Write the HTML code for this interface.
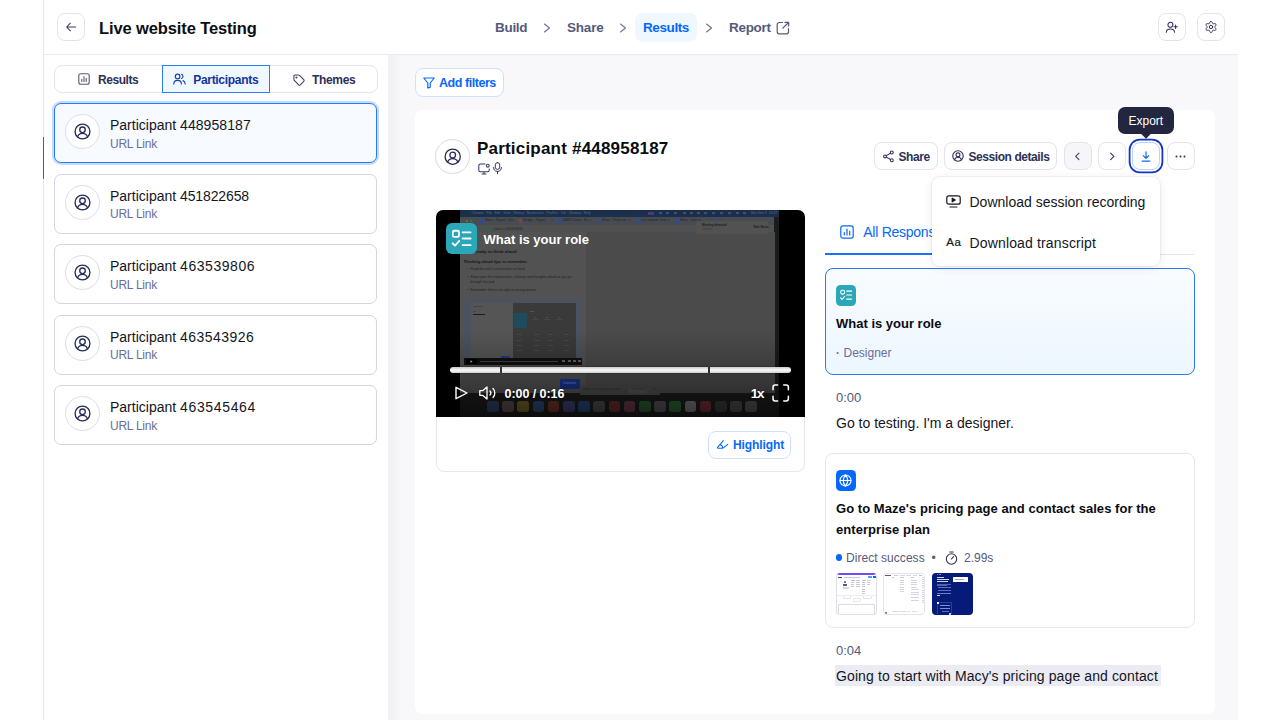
<!DOCTYPE html>
<html lang="en">
<head>
<meta charset="utf-8">
<title>Live website Testing</title>
<style>
*{box-sizing:border-box;margin:0;padding:0}
html,body{width:1280px;height:720px;overflow:hidden;background:#fff}
body{font-family:"Liberation Sans",sans-serif;color:#0d0e14;position:relative;-webkit-font-smoothing:antialiased}
.abs,.abs>*{position:absolute}
.t{position:absolute;white-space:nowrap;line-height:1}
.b{font-weight:700}
.btn{position:absolute;background:#fff;border:1px solid #e2e3ee;border-radius:8px}
svg{position:absolute;overflow:visible}
.navy{color:#2c3157}
.slate{color:#545a7c}
.muted{color:#686e9a}
.blue{color:#0568fd}
</style>
</head>
<body>
<!-- frame -->
<div class="abs" style="left:43px;top:0;width:1px;height:720px;background:#e6e7f0"></div>
<div class="abs" style="left:44px;top:55px;width:1194px;height:665px;background:#f8f8fb"></div>
<div class="abs" style="left:44px;top:54px;width:1194px;height:1px;background:#e9eaf2"></div>
<div class="abs" style="left:44px;top:55px;width:344px;height:665px;background:#fff"></div>
<div class="abs" style="left:388px;top:55px;width:14px;height:665px;background:linear-gradient(90deg,rgba(40,45,89,.045),rgba(40,45,89,0))"></div>
<div class="abs" style="left:43px;top:136.700px;width:1.200px;height:42px;background:#0568fd"></div>

<!-- HEADER -->
<div id="header">
  <div class="btn" style="left:57px;top:13.200px;width:28px;height:28.200px"></div>
  <svg style="left:65.300px;top:21.400px" width="12" height="12" viewBox="0 0 12 12" fill="none" stroke="#353b63" stroke-width="1.050" stroke-linecap="round" stroke-linejoin="round"><path d="M10.5 6H1.8M5.4 2.2 1.6 6l3.8 3.8"/></svg>
  <div class="t b" style="left:99px;top:20.200px;font-size:16.5px;letter-spacing:-0.12px">Live website Testing</div>

  <div class="t b slate" style="left:495px;top:21px;font-size:13.5px;letter-spacing:-0.3px">Build</div>
  <div class="t b slate" style="left:567px;top:21px;font-size:13.5px;letter-spacing:-0.2px">Share</div>
  <div class="abs" style="left:635px;top:13px;width:62px;height:29px;background:#eff7ff;border-radius:8px"></div>
  <div class="t b blue" style="left:643px;top:21px;font-size:13.5px;letter-spacing:-0.4px">Results</div>
  <div class="t b slate" style="left:729px;top:21px;font-size:13.5px;letter-spacing:-0.3px">Report</div>
  <svg style="left:543px;top:23px" width="8" height="10" viewBox="0 0 8 10" fill="none" stroke="#6c7195" stroke-width="1.1" stroke-linecap="round" stroke-linejoin="round"><path d="M1.5 1 6.5 5l-5 4"/></svg>
  <svg style="left:619px;top:23px" width="8" height="10" viewBox="0 0 8 10" fill="none" stroke="#6c7195" stroke-width="1.1" stroke-linecap="round" stroke-linejoin="round"><path d="M1.5 1 6.5 5l-5 4"/></svg>
  <svg style="left:705px;top:23px" width="8" height="10" viewBox="0 0 8 10" fill="none" stroke="#6c7195" stroke-width="1.1" stroke-linecap="round" stroke-linejoin="round"><path d="M1.5 1 6.5 5l-5 4"/></svg>
  <svg style="left:776px;top:21px" width="14" height="14" viewBox="0 0 14 14" fill="none" stroke="#545a7c" stroke-width="1.2" stroke-linecap="round" stroke-linejoin="round"><path d="M6.5 1.5H3.2a2 2 0 0 0-2 2v7.3a2 2 0 0 0 2 2h7.3a2 2 0 0 0 2-2V7.6M9 1.3h3.7V5M12.5 1.5 6.8 7.2"/></svg>

  <div class="btn" style="left:1158px;top:13.200px;width:28px;height:28.200px"></div>
  <div class="btn" style="left:1197px;top:13.200px;width:28px;height:28.200px"></div>
  <svg style="left:1165px;top:21px" width="14" height="13" viewBox="0 0 14 13" fill="none" stroke="#2c3157" stroke-width="1.050" stroke-linecap="round" stroke-linejoin="round"><circle cx="5.400" cy="3.800" r="2.500"/><path d="M1.300 11.200c0-2.200 1.700-3.200 4.100-3.200s4.100 1 4.100 3.200M10.600 4.100v3.400M8.900 5.800h3.400"/></svg>
  <svg style="left:1204.200px;top:20.400px" width="14" height="14" viewBox="-7 -7 14 14" fill="none" stroke="#2c3157" stroke-width="1" stroke-linecap="round" stroke-linejoin="round"><path d="M0.00 -5.65L0.48 -5.50L0.90 -5.10L1.22 -4.54L1.45 -3.97L1.64 -3.51L1.87 -3.25L2.22 -3.18L2.72 -3.24L3.32 -3.32L3.96 -3.33L4.52 -3.17L4.89 -2.83L5.01 -2.33L4.86 -1.77L4.54 -1.22L4.16 -0.73L3.86 -0.34L3.75 -0.00L3.86 0.34L4.16 0.73L4.54 1.22L4.86 1.77L5.01 2.33L4.89 2.82L4.52 3.17L3.96 3.33L3.32 3.32L2.72 3.24L2.22 3.18L1.88 3.25L1.64 3.51L1.45 3.97L1.22 4.54L0.90 5.10L0.48 5.50L0.00 5.65L-0.48 5.50L-0.90 5.10L-1.22 4.54L-1.45 3.97L-1.64 3.51L-1.88 3.25L-2.22 3.18L-2.72 3.24L-3.32 3.32L-3.96 3.33L-4.52 3.17L-4.89 2.83L-5.01 2.33L-4.86 1.77L-4.54 1.22L-4.16 0.73L-3.86 0.34L-3.75 0.00L-3.86 -0.34L-4.16 -0.73L-4.54 -1.22L-4.86 -1.77L-5.01 -2.33L-4.89 -2.82L-4.52 -3.17L-3.96 -3.33L-3.32 -3.32L-2.72 -3.24L-2.22 -3.18L-1.87 -3.25L-1.64 -3.51L-1.45 -3.97L-1.22 -4.54L-0.90 -5.10L-0.48 -5.50Z"/><circle cx="0" cy="0" r="1.700"/></svg>
</div>

<!-- SIDEBAR -->

<div id="sidebar">
  <!-- tabs -->
  <div class="abs" style="left:54px;top:65px;width:323.600px;height:28px;border:1px solid #e4e5ef;border-radius:8px;background:#fff"></div>
  <div class="abs" style="left:161.800px;top:65px;width:108px;height:28px;border:1.300px solid #2f7bf6;background:#f0f8ff"></div>
  <svg style="left:78.200px;top:73px" width="12" height="12" viewBox="0 0 12 12" fill="none" stroke="#545a7c" stroke-width="1.1" stroke-linecap="round" stroke-linejoin="round"><rect x=".8" y=".8" width="10.4" height="10.4" rx="2"/><path d="M3.8 8.6V6.4M6 8.6V3.6M8.2 8.6V5.4"/></svg>
  <div class="t b navy" style="left:98px;top:74.200px;font-size:12px;letter-spacing:-0.46px">Results</div>
  <svg style="left:173px;top:73px" width="13" height="12" viewBox="0 0 13 12" fill="none" stroke="#1d3fb3" stroke-width="1.15" stroke-linecap="round" stroke-linejoin="round"><circle cx="4.6" cy="3.4" r="2.3"/><path d="M.8 11c0-2.3 1.6-3.7 3.8-3.700s3.800 1.400 3.800 3.700M8.600 1.300a2.300 2.300 0 0 1 0 4.200M10 7.600c1.400.500 2.200 1.700 2.200 3.400"/></svg>
  <div class="t b" style="left:193.200px;top:74.200px;font-size:12px;letter-spacing:-0.30px;color:#12339f">Participants</div>
  <svg style="left:292.600px;top:73.500px" width="12" height="12" viewBox="0 0 13 13" fill="none" stroke="#3a3f63" stroke-width="1.1" stroke-linecap="round" stroke-linejoin="round"><path d="M1 2.300V6c0 .400.150.700.400 1l4.700 4.700a1.300 1.300 0 0 0 1.850 0l3.700-3.700a1.300 1.300 0 0 0 0-1.850L7 1.400C6.700 1.150 6.400 1 6 1H2.300A1.300 1.300 0 0 0 1 2.300Z"/><circle cx="3.700" cy="3.700" r=".5" fill="#3a3f63"/></svg>
  <div class="t b navy" style="left:312px;top:74.200px;font-size:12px;letter-spacing:-0.32px">Themes</div>
  <div class="abs" style="left:54px;top:103px;width:323px;height:60px;border:1px solid #2b78f5;border-radius:7px;background:#f7fbff;box-shadow:0 0 0 2px #c6dcff"></div>
  <div class="abs" style="left:65px;top:114px;width:35px;height:35px;border:1px solid #dcdde9;border-radius:50%;background:#fff"></div>
  <svg style="left:74px;top:123px" width="17" height="17" viewBox="0 0 16 16" fill="none" stroke="#272c55" stroke-width="1.25" stroke-linecap="round" stroke-linejoin="round"><circle cx="8" cy="8" r="7"/><circle cx="8" cy="6.400" r="2.600"/><path d="M3.300 13.100c.700-2.200 2.400-3.400 4.700-3.400s4 1.200 4.700 3.400"/></svg>
  <div class="t" style="left:110px;top:118px;font-size:14px;color:#14151d">Participant <span style="letter-spacing:0.07px">448958187</span></div>
  <div class="t muted" style="left:110px;top:137.5px;font-size:12px;letter-spacing:-0.25px">URL Link</div>
  <div class="abs" style="left:54px;top:173.5px;width:323px;height:60px;border:1px solid #d3d4e6;border-radius:7px;background:#fff"></div>
  <div class="abs" style="left:65px;top:184.5px;width:35px;height:35px;border:1px solid #dcdde9;border-radius:50%;background:#fff"></div>
  <svg style="left:74px;top:193.5px" width="17" height="17" viewBox="0 0 16 16" fill="none" stroke="#272c55" stroke-width="1.25" stroke-linecap="round" stroke-linejoin="round"><circle cx="8" cy="8" r="7"/><circle cx="8" cy="6.400" r="2.600"/><path d="M3.300 13.100c.700-2.200 2.400-3.400 4.700-3.400s4 1.200 4.700 3.400"/></svg>
  <div class="t" style="left:110px;top:188.5px;font-size:14px;color:#14151d">Participant <span style="letter-spacing:-0.13px">451822658</span></div>
  <div class="t muted" style="left:110px;top:208.0px;font-size:12px;letter-spacing:-0.25px">URL Link</div>
  <div class="abs" style="left:54px;top:244px;width:323px;height:60px;border:1px solid #d3d4e6;border-radius:7px;background:#fff"></div>
  <div class="abs" style="left:65px;top:255px;width:35px;height:35px;border:1px solid #dcdde9;border-radius:50%;background:#fff"></div>
  <svg style="left:74px;top:264px" width="17" height="17" viewBox="0 0 16 16" fill="none" stroke="#272c55" stroke-width="1.25" stroke-linecap="round" stroke-linejoin="round"><circle cx="8" cy="8" r="7"/><circle cx="8" cy="6.400" r="2.600"/><path d="M3.300 13.100c.700-2.200 2.400-3.400 4.700-3.400s4 1.200 4.700 3.400"/></svg>
  <div class="t" style="left:110px;top:259px;font-size:14px;color:#14151d">Participant <span style="letter-spacing:0.55px">463539806</span></div>
  <div class="t muted" style="left:110px;top:278.5px;font-size:12px;letter-spacing:-0.25px">URL Link</div>
  <div class="abs" style="left:54px;top:314.5px;width:323px;height:60px;border:1px solid #d3d4e6;border-radius:7px;background:#fff"></div>
  <div class="abs" style="left:65px;top:325.5px;width:35px;height:35px;border:1px solid #dcdde9;border-radius:50%;background:#fff"></div>
  <svg style="left:74px;top:334.5px" width="17" height="17" viewBox="0 0 16 16" fill="none" stroke="#272c55" stroke-width="1.25" stroke-linecap="round" stroke-linejoin="round"><circle cx="8" cy="8" r="7"/><circle cx="8" cy="6.400" r="2.600"/><path d="M3.300 13.100c.700-2.200 2.400-3.400 4.700-3.400s4 1.200 4.700 3.400"/></svg>
  <div class="t" style="left:110px;top:329.5px;font-size:14px;color:#14151d">Participant <span style="letter-spacing:0.45px">463543926</span></div>
  <div class="t muted" style="left:110px;top:349.0px;font-size:12px;letter-spacing:-0.25px">URL Link</div>
  <div class="abs" style="left:54px;top:385px;width:323px;height:60px;border:1px solid #d3d4e6;border-radius:7px;background:#fff"></div>
  <div class="abs" style="left:65px;top:396px;width:35px;height:35px;border:1px solid #dcdde9;border-radius:50%;background:#fff"></div>
  <svg style="left:74px;top:405px" width="17" height="17" viewBox="0 0 16 16" fill="none" stroke="#272c55" stroke-width="1.25" stroke-linecap="round" stroke-linejoin="round"><circle cx="8" cy="8" r="7"/><circle cx="8" cy="6.400" r="2.600"/><path d="M3.300 13.100c.700-2.200 2.400-3.400 4.700-3.400s4 1.200 4.700 3.400"/></svg>
  <div class="t" style="left:110px;top:400px;font-size:14px;color:#14151d">Participant <span style="letter-spacing:0.65px">463545464</span></div>
  <div class="t muted" style="left:110px;top:419.5px;font-size:12px;letter-spacing:-0.25px">URL Link</div>
</div>

<!-- MAIN -->

<div id="main">
  <!-- add filters -->
  <div class="btn" style="left:415px;top:68px;width:89px;height:29px;border-color:#cfe1ff"></div>
  <svg style="left:423px;top:77px" width="12" height="12" viewBox="0 0 12 12" fill="none" stroke="#0568fd" stroke-width="1.2" stroke-linecap="round" stroke-linejoin="round"><path d="M.8 1h10.400L7.200 6v4.300L4.800 11V6Z"/></svg>
  <div class="t b blue" style="left:439px;top:77px;font-size:12.5px;letter-spacing:-0.45px">Add filters</div>

  <!-- main card -->
  <div class="abs" style="left:415px;top:110px;width:800px;height:604px;background:#fff;border-radius:8px"></div>

  <!-- participant header -->
  <div class="abs" style="left:435px;top:139px;width:35px;height:35px;border:1px solid #d9dae7;border-radius:50%;background:#fff"></div>
  <svg style="left:444px;top:147.600px" width="17.400" height="17.400" viewBox="0 0 16 16" fill="none" stroke="#272c55" stroke-width="1.2" stroke-linecap="round" stroke-linejoin="round"><circle cx="8" cy="8" r="7"/><circle cx="8" cy="6.400" r="2.600"/><path d="M3.300 13.100c.700-2.200 2.400-3.400 4.700-3.400s4 1.200 4.700 3.400"/></svg>
  <div class="t b" style="left:477px;top:140px;font-size:17px;letter-spacing:0.2px;color:#0b0c10">Participant #448958187</div>
  <svg style="left:477.500px;top:162.500px" width="13" height="12" viewBox="0 0 13 12" fill="none" stroke="#333860" stroke-width="1.050" stroke-linecap="round" stroke-linejoin="round"><path d="M7 .9H2.300a1.500 1.500 0 0 0-1.500 1.500v4.900a1.500 1.500 0 0 0 1.500 1.500h7.400a1.500 1.500 0 0 0 1.500-1.500V6M6 8.800v2M4 10.900h4"/><circle cx="9.800" cy="2.700" r="1.400"/></svg>
  <svg style="left:493px;top:162.200px" width="9" height="12" viewBox="0 0 9 12" fill="none" stroke="#333860" stroke-width="1" stroke-linecap="round" stroke-linejoin="round"><rect x="2.300" y=".6" width="4.400" height="6.800" rx="2.200"/><path d="M.6 5.500a3.900 3.900 0 0 0 7.800 0M4.500 9.500v2.200"/></svg>

  <!-- toolbar -->
  <div class="btn" style="left:874.4px;top:142.200px;width:63.3px;height:28.100px"></div>
  <svg style="left:882.500px;top:150px" width="12" height="13" viewBox="0 0 12 13" fill="none" stroke="#2c3157" stroke-width="1.050" stroke-linecap="round" stroke-linejoin="round"><circle cx="2" cy="6.400" r="1.450"/><circle cx="8.800" cy="2.500" r="1.450"/><circle cx="8.800" cy="10.200" r="1.450"/><path d="M3.300 5.650 7.500 3.250M3.300 7.150 7.500 9.450"/></svg>
  <div class="t b navy" style="left:898.500px;top:150.500px;font-size:12px;letter-spacing:-0.45px">Share</div>

  <div class="btn" style="left:944px;top:142.200px;width:113px;height:28.100px"></div>
  <svg style="left:952px;top:150px" width="12" height="12" viewBox="0 0 16 16" fill="none" stroke="#2c3157" stroke-width="1.500" stroke-linecap="round" stroke-linejoin="round"><circle cx="8" cy="8" r="7"/><circle cx="8" cy="6.400" r="2.600"/><path d="M3.300 13.100c.700-2.200 2.400-3.400 4.700-3.400s4 1.200 4.700 3.400"/></svg>
  <div class="t b navy" style="left:968.500px;top:150.500px;font-size:12px;letter-spacing:-0.43px">Session details</div>

  <div class="btn" style="left:1063.5px;top:142.200px;width:28px;height:28.100px;background:#f6f6fa"></div>
  <svg style="left:1073.800px;top:152px" width="6.600" height="8.800" viewBox="0 0 6 8" fill="none" stroke="#3a3f63" stroke-width=".95" stroke-linecap="round" stroke-linejoin="round"><path d="M4.500 1 1.500 4l3 3"/></svg>
  <div class="btn" style="left:1098px;top:142.200px;width:28px;height:28.100px"></div>
  <svg style="left:1108.800px;top:152px" width="6.600" height="8.800" viewBox="0 0 6 8" fill="none" stroke="#2c3157" stroke-width=".95" stroke-linecap="round" stroke-linejoin="round"><path d="M1.500 1 4.500 4l-3 3"/></svg>
  <div class="btn" style="left:1132px;top:142.200px;width:28px;height:28.100px;border-color:#bcd4fb;box-shadow:0 0 0 1.500px #fff,0 0 0 3.300px #1337c4"></div>
  <svg style="left:1141px;top:151px" width="10" height="11" viewBox="0 0 10 11" fill="none" stroke="#0568fd" stroke-width="1.200" stroke-linecap="round" stroke-linejoin="round"><path d="M5 .8v6.400M2.300 4.700 5 7.400l2.700-2.700M1.200 10.200h7.600"/></svg>
  <div class="btn" style="left:1167px;top:142.200px;width:28px;height:28.100px"></div>
  <svg style="left:1174.700px;top:155.300px" width="11" height="3" viewBox="0 0 11 3" fill="#2c3157"><circle cx="1.500" cy="1.500" r="1"/><circle cx="5.500" cy="1.500" r="1"/><circle cx="9.500" cy="1.500" r="1"/></svg>

  <!-- tooltip -->
  <div class="abs" style="left:1118px;top:106.500px;width:56.200px;height:27.500px;background:#22263f;border-radius:7px"></div>
  <div class="abs" style="left:1142px;top:129px;width:8px;height:8px;background:#22263f;transform:rotate(45deg)"></div>
  <div class="t" style="left:1128.500px;top:114.500px;font-size:12px;color:#fff">Export</div>

  <!-- video card -->
  <div class="abs" style="left:435.500px;top:209.500px;width:369.500px;height:262px;border:1px solid #e6e7f0;border-radius:8px;background:#fff"></div>
  <div id="video" class="abs" style="left:436px;top:210px;width:369px;height:207px;background:#000;border-radius:7px 7px 0 0;overflow:hidden">
    <div style="left:24px;top:0px;width:319px;height:207px;background:#1c1c1e;"></div>
    <div style="left:24px;top:0px;width:319px;height:6.5px;background:#1b2f4c;"></div>
    <div style="left:24px;top:6.5px;width:314.5px;height:8.5px;background:#474b52;"></div>
    <div style="left:24px;top:15px;width:314.5px;height:7px;background:#4f5051;"></div>
    <div style="left:338.3px;top:6.5px;width:4.7px;height:200.5px;background:#1c1c1e;"></div>
    <div style="left:24px;top:22px;width:126px;height:161px;background:#525252;"></div>
    <div style="left:150px;top:22px;width:188.5px;height:161px;background:#4b4b4b;"></div>
    <div style="left:260px;top:11px;width:72px;height:13px;background:#525252;border-radius:2px"></div>
    <div style="left:279.5px;top:7.5px;width:3px;height:1.2px;background:#2a4ab0;"></div>
    <div style="left:26.5px;top:9.9px;width:2.2px;height:2.2px;background:#8a3a34;border-radius:50%"></div>
    <div style="left:30px;top:9.9px;width:2.2px;height:2.2px;background:#8a742f;border-radius:50%"></div>
    <div style="left:33.5px;top:9.9px;width:2.2px;height:2.2px;background:#3c7a3a;border-radius:50%"></div>
    <div style="left:44.2px;top:9.3px;width:3px;height:3.5px;background:#2a4a9a;border-radius:.6px"></div>
    <div style="left:83.3px;top:9.3px;width:3px;height:3.5px;background:#9a3a30;border-radius:.6px"></div>
    <div style="left:121.7px;top:9.3px;width:3px;height:3.5px;background:#2a4a9a;border-radius:.6px"></div>
    <div style="left:160.8px;top:9.3px;width:3px;height:3.5px;background:#2a4a9a;border-radius:.6px"></div>
    <div style="left:201.5px;top:9.3px;width:3px;height:3.5px;background:#2a4a9a;border-radius:.6px"></div>
    <div style="left:240.3px;top:9.3px;width:3px;height:3.5px;background:#2a4a9a;border-radius:.6px"></div>
    <div style="left:212px;top:1.8px;width:6px;height:3px;background:#4a3a7a;"></div>
    <div style="left:223px;top:2.3px;width:3px;height:2px;background:#3f5272;border-radius:.5px"></div>
    <div style="left:230px;top:2.3px;width:3px;height:2px;background:#3f5272;border-radius:.5px"></div>
    <div style="left:238px;top:2.3px;width:3px;height:2px;background:#3f5272;border-radius:.5px"></div>
    <div style="left:247px;top:2.3px;width:3px;height:2px;background:#3f5272;border-radius:.5px"></div>
    <div style="left:254px;top:2.3px;width:3px;height:2px;background:#3f5272;border-radius:.5px"></div>
    <div style="left:261px;top:2.3px;width:3px;height:2px;background:#3f5272;border-radius:.5px"></div>
    <div style="left:268px;top:2.3px;width:3px;height:2px;background:#3f5272;border-radius:.5px"></div>
    <div style="left:276px;top:2.3px;width:3px;height:2px;background:#3f5272;border-radius:.5px"></div>
    <div style="left:284px;top:2.3px;width:3px;height:2px;background:#3f5272;border-radius:.5px"></div>
    <div style="left:292px;top:2.3px;width:3px;height:2px;background:#3f5272;border-radius:.5px"></div>
    <div style="left:300px;top:2.3px;width:3px;height:2px;background:#3f5272;border-radius:.5px"></div>
    <div style="left:307px;top:2.3px;width:3px;height:2px;background:#3f5272;border-radius:.5px"></div>
    <div style="left:51.4px;top:18.1px;width:3.2px;height:3.2px;background:#1f6b3a;border-radius:50%"></div>
    <div style="left:313.5px;top:16px;width:2px;height:3px;background:#2f6a3a;border-radius:.5px"></div>
    <div style="left:28px;top:88px;width:118px;height:66.5px;background:#4a535e;"></div>
    <div style="left:34.5px;top:92.5px;width:42px;height:55.5px;background:#555555;"></div>
    <div style="left:76.5px;top:92.5px;width:63.5px;height:55.5px;background:#3a3a3a;"></div>
    <div style="left:77.5px;top:103px;width:13px;height:15px;background:#1f4c5c;"></div>
    <div style="left:37px;top:95.5px;width:10px;height:0.7px;background:#444;"></div>
    <div style="left:37px;top:101px;width:3px;height:0.6px;background:#444;"></div>
    <div style="left:37px;top:104.3px;width:12px;height:0.9px;background:#1c1c1c;"></div>
    <div style="left:94px;top:101px;width:4px;height:0.8px;background:#555;"></div>
    <div style="left:98px;top:107px;width:2px;height:1px;background:#505050;"></div>
    <div style="left:96px;top:109.3px;width:6px;height:0.7px;background:#474747;"></div>
    <div style="left:110px;top:107px;width:2px;height:1px;background:#505050;"></div>
    <div style="left:108px;top:109.3px;width:6px;height:0.7px;background:#474747;"></div>
    <div style="left:122px;top:107px;width:2px;height:1px;background:#505050;"></div>
    <div style="left:120px;top:109.3px;width:6px;height:0.7px;background:#474747;"></div>
    <div style="left:81px;top:124px;width:5px;height:0.7px;background:#484848;"></div>
    <div style="left:98px;top:124px;width:5px;height:0.7px;background:#484848;"></div>
    <div style="left:112px;top:124px;width:5px;height:0.7px;background:#484848;"></div>
    <div style="left:128px;top:124px;width:5px;height:0.7px;background:#484848;"></div>
    <div style="left:81px;top:130px;width:5px;height:0.7px;background:#484848;"></div>
    <div style="left:98px;top:130px;width:5px;height:0.7px;background:#484848;"></div>
    <div style="left:112px;top:130px;width:5px;height:0.7px;background:#484848;"></div>
    <div style="left:128px;top:130px;width:5px;height:0.7px;background:#484848;"></div>
    <div style="left:81px;top:135px;width:5px;height:0.7px;background:#484848;"></div>
    <div style="left:98px;top:135px;width:5px;height:0.7px;background:#484848;"></div>
    <div style="left:112px;top:135px;width:5px;height:0.7px;background:#484848;"></div>
    <div style="left:128px;top:135px;width:5px;height:0.7px;background:#484848;"></div>
    <div style="left:81px;top:140px;width:5px;height:0.7px;background:#484848;"></div>
    <div style="left:98px;top:140px;width:5px;height:0.7px;background:#484848;"></div>
    <div style="left:112px;top:140px;width:5px;height:0.7px;background:#484848;"></div>
    <div style="left:128px;top:140px;width:5px;height:0.7px;background:#484848;"></div>
    <div style="left:28px;top:147.5px;width:118px;height:7px;background:#101010;"></div>
    <div style="left:30px;top:148.5px;width:11px;height:5px;background:#000;"></div>
    <svg style="left:34px;top:149.600px" width="3" height="3" viewBox="0 0 3 3"><path d="M.5 .3v2.400L2.600 1.500Z" fill="#c8c8c8"/></svg>
    <div style="left:44px;top:150.6px;width:78px;height:1px;background:#454545;"></div>
    <div style="left:126px;top:149.6px;width:3px;height:2.8px;background:#6a6a6a;border-radius:.6px"></div>
    <div style="left:131.5px;top:149.6px;width:3px;height:2.8px;background:#6a6a6a;border-radius:.6px"></div>
    <div style="left:136.5px;top:149.6px;width:3px;height:2.8px;background:#6a6a6a;border-radius:.6px"></div>
    <div style="left:141.5px;top:149.6px;width:3px;height:2.8px;background:#6a6a6a;border-radius:.6px"></div>
    <div style="left:65px;top:145.5px;width:8.5px;height:2.2px;background:#1d3a90;"></div>
    <div style="left:123.5px;top:168.5px;width:20.5px;height:10px;background:#18348c;border-radius:1.5px"></div>
    <div style="left:144px;top:176px;width:80px;height:9px;background:#4c4c4c;border-radius:1px"></div>
    <div style="left:193px;top:177.5px;width:18px;height:6px;background:#565656;border-radius:1px"></div>
    <div style="left:51px;top:190.500px;width:11.500px;height:11.500px;background:#3a66b0;border-radius:2.700px;opacity:.5"></div>
    <div style="left:66.2px;top:190.500px;width:11.500px;height:11.500px;background:#9a7a7a;border-radius:2.700px;opacity:.5"></div>
    <div style="left:81.4px;top:190.500px;width:11.500px;height:11.500px;background:#c8a830;border-radius:2.700px;opacity:.5"></div>
    <div style="left:96.6px;top:190.500px;width:11.500px;height:11.500px;background:#3a78c8;border-radius:2.700px;opacity:.5"></div>
    <div style="left:111.8px;top:190.500px;width:11.500px;height:11.500px;background:#c8482e;border-radius:2.700px;opacity:.5"></div>
    <div style="left:127px;top:190.500px;width:11.500px;height:11.500px;background:#5a5fc8;border-radius:2.700px;opacity:.5"></div>
    <div style="left:142.2px;top:190.500px;width:11.500px;height:11.500px;background:#2f6fd0;border-radius:2.700px;opacity:.5"></div>
    <div style="left:157.4px;top:190.500px;width:11.500px;height:11.500px;background:#7a7a7a;border-radius:2.700px;opacity:.5"></div>
    <div style="left:172.6px;top:190.500px;width:11.500px;height:11.500px;background:#b83a3a;border-radius:2.700px;opacity:.5"></div>
    <div style="left:187.8px;top:190.500px;width:11.500px;height:11.500px;background:#b05a6a;border-radius:2.700px;opacity:.5"></div>
    <div style="left:203px;top:190.500px;width:11.500px;height:11.500px;background:#3a9a3a;border-radius:2.700px;opacity:.5"></div>
    <div style="left:218.2px;top:190.500px;width:11.500px;height:11.500px;background:#8a8a8a;border-radius:2.700px;opacity:.5"></div>
    <div style="left:233.4px;top:190.500px;width:11.500px;height:11.500px;background:#3aaa4a;border-radius:2.700px;opacity:.5"></div>
    <div style="left:248.6px;top:190.500px;width:11.500px;height:11.500px;background:#d0d0d0;border-radius:2.700px;opacity:.5"></div>
    <div style="left:263.8px;top:190.500px;width:11.500px;height:11.500px;background:#c83a4a;border-radius:2.700px;opacity:.5"></div>
    <div style="left:279px;top:190.500px;width:11.500px;height:11.500px;background:#555;border-radius:2.700px;opacity:.5"></div>
    <div style="left:294.2px;top:190.500px;width:11.500px;height:11.500px;background:#777;border-radius:2.700px;opacity:.5"></div>
    <div style="left:309.4px;top:190.500px;width:11.500px;height:11.500px;background:#888;border-radius:2.700px;opacity:.5"></div>
    <div class="t" style="left:49px;top:9.3px;font-size:3.2px;font-weight:400;color:#262626;">Maze - Report - Un&#8230;</div>
    <div class="t" style="left:87.5px;top:9.3px;font-size:3.2px;font-weight:400;color:#262626;">Bridge &#8211; Figma</div>
    <div class="t" style="left:127px;top:9.3px;font-size:3.2px;font-weight:400;color:#262626;">MAZE Demo - Bu&#8230;</div>
    <div class="t" style="left:166px;top:9.3px;font-size:3.2px;font-weight:400;color:#262626;">Maze - Think use&#8230;</div>
    <div class="t" style="left:205px;top:9.3px;font-size:3.2px;font-weight:400;color:#262626;">Live website Testi&#8230;</div>
    <div class="t" style="left:244px;top:9.3px;font-size:3.2px;font-weight:400;color:#262626;">Maze - User st&#8230;</div>
    <div class="t" style="left:76px;top:9.3px;font-size:3.2px;font-weight:400;color:#262626;">&#215;</div>
    <div class="t" style="left:115px;top:9.3px;font-size:3.2px;font-weight:400;color:#262626;">&#215;</div>
    <div class="t" style="left:154px;top:9.3px;font-size:3.2px;font-weight:400;color:#262626;">&#215;</div>
    <div class="t" style="left:193px;top:9.3px;font-size:3.2px;font-weight:400;color:#262626;">&#215;</div>
    <div class="t" style="left:232px;top:9.3px;font-size:3.2px;font-weight:400;color:#262626;">&#215;</div>
    <div class="t" style="left:35.5px;top:1.7px;font-size:3.4px;font-weight:400;color:#566c8c;">Chrome&nbsp;&nbsp; File&nbsp;&nbsp; Edit&nbsp;&nbsp; View&nbsp;&nbsp; History&nbsp;&nbsp; Bookmarks&nbsp;&nbsp; Profiles&nbsp;&nbsp; Tab&nbsp;&nbsp; Window&nbsp;&nbsp; Help</div>
    <div class="t" style="left:315px;top:1.7px;font-size:3.3px;font-weight:400;color:#566c8c;">Mon Nov 3&nbsp; 13:47</div>
    <div class="t" style="left:57.5px;top:18.2px;font-size:3px;font-weight:400;color:#262626;">t.maze.co/463539806</div>
    <div class="t" style="left:266px;top:13.5px;font-size:3px;font-weight:700;color:#1c1c1c;">Meeting detected</div>
    <div class="t" style="left:266px;top:17.5px;font-size:2.8px;font-weight:400;color:#3a3a3a;">Chrome</div>
    <div class="t" style="left:317px;top:15.5px;font-size:3px;font-weight:700;color:#1c1c1c;">Take Notes</div>
    <div class="t" style="left:37.3px;top:39.6px;font-size:4.4px;font-weight:700;color:#161616;">Ready to think aloud</div>
    <div class="t" style="left:27.5px;top:50.4px;font-size:4.1px;font-weight:700;color:#161616;">Thinking aloud tips to remember</div>
    <div class="t" style="left:31.3px;top:58.3px;font-size:3.4px;font-weight:400;color:#222;">&#8226;&nbsp; Read the task&#39;s instructions out loud</div>
    <div class="t" style="left:31.3px;top:66px;font-size:3.4px;font-weight:400;color:#222;">&#8226;&nbsp; Share your first impressions, feelings and thoughts aloud as you go</div>
    <div class="t" style="left:34.4px;top:71px;font-size:3.4px;font-weight:400;color:#222;">through the task</div>
    <div class="t" style="left:31.3px;top:78.5px;font-size:3.4px;font-weight:400;color:#222;">&#8226;&nbsp; Remember there&#39;s no right or wrong answer</div>
    <div class="t" style="left:127px;top:171.8px;font-size:3.2px;font-weight:400;color:#7f97e0;">Continue</div>
    <div class="t" style="left:147px;top:178.7px;font-size:2.6px;font-weight:400;color:#2e2e2e;">t.maze.co is sharing your screen.</div>
    <div class="t" style="left:195px;top:178.7px;font-size:2.6px;font-weight:400;color:#2e2e2e;">Stop sharing</div>
    <div class="t" style="left:215px;top:178.7px;font-size:2.6px;font-weight:400;color:#1d3c9a;">Hide</div>
    <div style="left:0;top:120px;width:369px;height:87px;background:linear-gradient(180deg,rgba(0,0,0,0) 0%,rgba(0,0,0,.28) 60%,rgba(0,0,0,.55) 100%)"></div>
    <div style="left:10px;top:13.300px;width:31px;height:31px;border-radius:6px;background:#2aa7b8"></div>
    <svg style="left:10px;top:13.300px" width="31" height="31" viewBox="0 0 20 20" fill="none" stroke="#fff" stroke-width="1.150" stroke-linecap="round" stroke-linejoin="round"><rect x="4.400" y="5" width="4" height="4" rx=".9"/><path d="M10.700 6h5.200M10.700 10h5.200M10.700 14.300h5.200M4.300 13.100l1.500 1.500 2.800-3"/></svg>
    <div class="t b" style="left:47.500px;top:22.500px;font-size:13px;color:#fff">What is your role</div>
    <div style="left:13.500px;top:157px;width:50.500px;height:5.500px;background:linear-gradient(180deg,#c9c9c9 0%,#f4f4f4 45%,#f4f4f4 60%,#cfcfcf 100%);box-shadow:0 0 2px rgba(0,0,0,.55);border-radius:3px 0 0 3px"></div>
    <div style="left:66px;top:157px;width:206px;height:5.500px;background:linear-gradient(180deg,#c9c9c9 0%,#f4f4f4 45%,#f4f4f4 60%,#cfcfcf 100%);box-shadow:0 0 2px rgba(0,0,0,.55)"></div>
    <div style="left:274px;top:157px;width:81px;height:5.500px;background:linear-gradient(180deg,#c9c9c9 0%,#f4f4f4 45%,#f4f4f4 60%,#cfcfcf 100%);box-shadow:0 0 2px rgba(0,0,0,.55);border-radius:0 3px 3px 0"></div>
    <svg style="left:18.500px;top:176px" width="13" height="14" viewBox="0 0 13 14" fill="none" stroke="#fff" stroke-width="1.400" stroke-linejoin="round"><path d="M1 1.300v11.400L12 7Z"/></svg>
    <svg style="left:42.500px;top:176px" width="18" height="14" viewBox="0 0 18 14" fill="none" stroke="#fff" stroke-width="1.300" stroke-linecap="round" stroke-linejoin="round"><path d="M.8 4.700h2.800L8 1v12L3.600 9.300H.8Z"/><path d="M11 5a3 3 0 0 1 0 4M14 2.500a6.500 6.500 0 0 1 0 9"/></svg>
    <div class="t b" style="left:68.500px;top:177.800px;font-size:12.500px;color:#fff;letter-spacing:-0.05px;text-shadow:0 0 2px rgba(0,0,0,.6)">0:00 / 0:16</div>
    <div class="t b" style="left:314.700px;top:177px;font-size:13.500px;color:#fff;letter-spacing:-1.300px;text-shadow:0 0 2px rgba(0,0,0,.6)">1x</div>
    <svg style="left:335.800px;top:173.900px" width="17.400" height="18" viewBox="0 0 17 17" preserveAspectRatio="none" fill="none" stroke="#fff" stroke-width="1.500" stroke-linecap="round" stroke-linejoin="round"><path d="M1 5.500V3a2 2 0 0 1 2-2h2.500M11.500 1H14a2 2 0 0 1 2 2v2.500M16 11.500V14a2 2 0 0 1-2 2h-2.500M5.500 16H3a2 2 0 0 1-2-2v-2.500"/></svg>
  </div>
  <div class="btn" style="left:708px;top:430.700px;width:83px;height:28px;border-color:#cfe1ff"></div>
  <svg style="left:717px;top:440px" width="12" height="10" viewBox="0 0 12 10" fill="none" stroke="#0568fd" stroke-width="1.050" stroke-linecap="round" stroke-linejoin="round"><path d="M6.300 .6.600 7.400C.2 8 .5 8.300 1.100 8.300H5.600L10.700 4.300M2.700 4.700C4.400 4.500 5.700 6.300 5.600 8.300"/></svg>
  <div class="t b blue" style="left:733px;top:439px;font-size:12px;letter-spacing:-0.1px">Highlight</div>

  <!-- responses tab -->
  <div class="abs" style="left:825px;top:254px;width:369px;height:1px;background:#e4e5ef"></div>
  <div class="abs" style="left:825px;top:252.700px;width:130px;height:2px;background:#1a72fc"></div>
  <svg style="left:839.900px;top:224.700px" width="14" height="14" viewBox="0 0 14 14" fill="none" stroke="#0568fd" stroke-width="1.200" stroke-linecap="round" stroke-linejoin="round"><rect x=".8" y=".8" width="12.400" height="12.400" rx="2.200"/><path d="M4.300 10V7.600M7 10V4M9.700 10V6.200"/></svg>
  <div class="t blue" style="left:863.300px;top:224.800px;font-size:14px;letter-spacing:-0.26px">All Responses</div>

  <!-- question card 1 -->
  <div class="abs" style="left:825px;top:268px;width:369.500px;height:106.500px;border:1px solid #2b78f5;border-radius:8px;background:linear-gradient(180deg,#f8fcff 0%,#edf7ff 100%)"></div>
  <div class="abs" style="left:835.600px;top:285px;width:20.500px;height:20.800px;border-radius:4.500px;background:#2aa7b8;box-shadow:0 0 0 1.200px #fff"></div>
  <svg style="left:835.600px;top:285.400px" width="20.500" height="20" viewBox="0 0 20 20" fill="none" stroke="#fff" stroke-width="1.100" stroke-linecap="round" stroke-linejoin="round"><rect x="4.500" y="5.300" width="3.800" height="3.800" rx="1.500"/><path d="M10.400 6.100h5M10.400 10h5M10.400 14.100h5M4.400 12.900l1.400 1.400 2.600-2.800"/></svg>
  <div class="t b" style="left:836px;top:317px;font-size:13px;color:#0b0c10">What is your role</div>
  <div class="t muted" style="left:836.300px;top:348.800px;font-size:7px">&#8226;</div>
  <div class="t muted" style="left:843.500px;top:346.500px;font-size:12px">Designer</div>

  <div class="t slate" style="left:836px;top:391px;font-size:13px">0:00</div>
  <div class="t" style="left:836px;top:415.500px;font-size:14px;color:#14151d">Go to testing. I'm a designer.</div>

  <!-- task card 2 -->
  <div class="abs" style="left:825px;top:453px;width:369.500px;height:175px;border:1px solid #e6e7f0;border-radius:8px;background:#fff"></div>
  <div class="abs" style="left:835.600px;top:469.800px;width:20.500px;height:21px;border-radius:4.500px;background:#0568fd"></div>
  <svg style="left:839.400px;top:473.800px" width="13" height="13" viewBox="0 0 12 12" fill="none" stroke="#fff" stroke-width="1.100" stroke-linecap="round" stroke-linejoin="round"><circle cx="6" cy="6" r="5.100"/><path d="M1 6h10M6 .9c-2.700 2.800-2.700 7.400 0 10.200M6 .9c2.700 2.800 2.700 7.400 0 10.200"/></svg>
  <div class="t b" style="left:836px;top:502px;font-size:13px;letter-spacing:0.05px;color:#0b0c10">Go to Maze's pricing page and contact sales for the</div>
  <div class="t b" style="left:836px;top:523px;font-size:13px;letter-spacing:0.05px;color:#0b0c10">enterprise plan</div>
  <div class="abs" style="left:835.700px;top:554.300px;width:6.500px;height:6.500px;border-radius:50%;background:#0568fd"></div>
  <div class="t slate" style="left:846px;top:551.500px;font-size:12px;letter-spacing:0.05px">Direct success</div>
  <div class="t slate" style="left:931.500px;top:551.500px;font-size:12px">&#8226;</div>
  <svg style="left:945px;top:550.500px" width="13" height="14" viewBox="0 0 13 14" fill="none" stroke="#2c3157" stroke-width="1.100" stroke-linecap="round" stroke-linejoin="round"><circle cx="6.500" cy="8" r="5.200"/><path d="M4.800 1h3.400M6.500 8 8.600 5.700"/></svg>
  <div class="t slate" style="left:964px;top:551.500px;font-size:12px">2.99s</div>

  <div id="th1" class="abs" style="left:835.500px;top:572.500px;width:41px;height:42px;border:1px solid #dfe0ec;border-top-color:#6a4df5;border-radius:4px;background:#fff;overflow:hidden">
    <div style="left:0;top:0;width:40px;height:.8px;background:#6a4df5"></div>
    <div style="left:1px;top:3px;width:4px;height:1px;background:#444a66"></div>
    <div style="left:7px;top:3px;width:16px;height:1px;background:#c9cbd9"></div>
    <div style="left:31px;top:2.700px;width:4px;height:1.500px;background:#5b9bff"></div>
    <div style="left:36px;top:2.700px;width:4px;height:1.500px;background:#0568fd"></div>
    <div style="left:7px;top:7px;width:2.500px;height:2.500px;background:#3d7bf7;border-radius:.5px"></div>
    <div style="left:6px;top:10.500px;width:4px;height:1.500px;background:#555a75"></div>
    <div style="left:6px;top:13px;width:6px;height:2px;background:#d5d7e3"></div>
    <div style="left:14px;top:6px;width:4px;height:1px;background:#a9c4f5"></div>
    <div style="left:14px;top:8.500px;width:3px;height:7px;background:repeating-linear-gradient(180deg,#c4c6d4 0 1px,#fff 1px 2.200px)"></div>
    <div style="left:19.500px;top:6px;width:4px;height:1px;background:#c9cbd9"></div>
    <div style="left:19.500px;top:8.500px;width:3.500px;height:6px;background:repeating-linear-gradient(180deg,#c4c6d4 0 1px,#fff 1px 2.200px)"></div>
    <div style="left:25px;top:6px;width:4px;height:1px;background:#a9c4f5"></div>
    <div style="left:25px;top:8.500px;width:3.500px;height:13px;background:repeating-linear-gradient(180deg,#c4c6d4 0 1px,#fff 1px 2.200px)"></div>
    <div style="left:30.500px;top:6px;width:4px;height:1px;background:#c9cbd9"></div>
    <div style="left:30.500px;top:8.500px;width:3px;height:4px;background:repeating-linear-gradient(180deg,#c4c6d4 0 1px,#fff 1px 2.200px)"></div>
    <div style="left:0;top:21.500px;width:40px;height:1px;background:#eceef5"></div>
    <div style="left:6px;top:22.500px;width:8.500px;height:3px;border:1px solid #e4e6f0;border-top:0;border-radius:0 0 1px 1px"></div>
    <div style="left:16.500px;top:24px;width:8px;height:4.500px;border:1px solid #e4e6f0;border-radius:1px"></div>
    <div style="left:26.500px;top:22.500px;width:8.500px;height:3px;border:1px solid #e4e6f0;border-top:0;border-radius:0 0 1px 1px"></div>
    <div style="left:1.500px;top:30px;width:37px;height:12px;border:1px solid #d9dbe8;border-radius:1px"></div>
  </div>
  <div id="th2" class="abs" style="left:883.300px;top:572.500px;width:41.400px;height:42px;border:1px solid #e3e4ee;border-radius:4px;background:#fff;overflow:hidden">
    <div style="left:1px;top:1.500px;width:6px;height:1px;background:#555a75"></div>
    <div style="left:10px;top:1.500px;width:4px;height:1px;background:#c9cbd9"></div>
    <div style="left:15.500px;top:1.500px;width:5px;height:1px;background:#d5d7e3"></div>
    <div style="left:22px;top:1.500px;width:4.500px;height:1px;background:#d5d7e3"></div>
    <div style="left:28.500px;top:1.500px;width:4.500px;height:1px;background:#d5d7e3"></div>
    <div style="left:35px;top:1.500px;width:3px;height:1px;background:#a9c4f5"></div>
    <div style="left:7.500px;top:3px;width:2.500px;height:1px;background:#c9cbd9"></div>
    <div style="left:16px;top:3px;width:3.500px;height:1.500px;background:#c9cbd9"></div>
    <div style="left:26.500px;top:3px;width:3.500px;height:1.500px;background:#c9cbd9"></div>
    <div style="left:16px;top:6px;width:3.500px;height:12px;background:repeating-linear-gradient(180deg,#d3d5e1 0 1px,#fff 1px 2.200px)"></div>
    <div style="left:26.500px;top:6px;width:6px;height:8px;background:repeating-linear-gradient(180deg,#d3d5e1 0 1px,#fff 1px 2.200px)"></div>
    <div style="left:26.500px;top:15px;width:8.500px;height:12px;background:repeating-linear-gradient(180deg,#d3d5e1 0 1px,#fff 1px 2.700px)"></div>
    <div style="left:37.500px;top:3px;width:3px;height:27px;background:repeating-linear-gradient(180deg,#d3d5e1 0 1px,#fff 1px 2.100px)"></div>
    <div style="left:8px;top:37px;width:8px;height:1px;background:#d9dbe6"></div>
    <div style="left:17px;top:37px;width:4.500px;height:1px;background:#d9dbe6"></div>
    <div style="left:23px;top:37px;width:3px;height:1px;background:#d9dbe6"></div>
    <div style="left:27.500px;top:37px;width:5px;height:1px;background:#d9dbe6"></div>
    <div style="left:.5px;top:38px;width:2.500px;height:2.500px;border-radius:50%;background:#2457c5"></div>
  </div>
  <div id="th3" class="abs" style="left:931.700px;top:572.500px;width:41.300px;height:42px;border-radius:4px;background:#061b78;overflow:hidden">
    <div style="left:5px;top:1.500px;width:1.500px;height:1px;background:#7d8bc4"></div>
    <div style="left:7.500px;top:1.500px;width:1.500px;height:1px;background:#7d8bc4"></div>
    <div style="left:5px;top:4.500px;width:7px;height:1.300px;background:#cdd4f0"></div>
    <div style="left:5px;top:6.500px;width:12.500px;height:1.300px;background:#cdd4f0"></div>
    <div style="left:5px;top:8.500px;width:11px;height:1.300px;background:#cdd4f0"></div>
    <div style="left:5px;top:11px;width:14px;height:.8px;background:#5163ad"></div>
    <div style="left:5px;top:12.500px;width:10px;height:.8px;background:#5163ad"></div>
    <div style="left:6px;top:14px;width:13px;height:4.500px;background:repeating-linear-gradient(180deg,#5d6fb8 0 .8px,#061b78 .8px 1.600px)"></div>
    <div style="left:5px;top:20.500px;width:14px;height:.9px;background:#6f80c4"></div>
    <div style="left:5px;top:22.800px;width:3.500px;height:1px;background:#cdd4f0"></div>
    <div style="left:21.300px;top:4.200px;width:15.500px;height:5.600px;background:#fff;border-radius:.5px"></div>
    <div style="left:23px;top:6.600px;width:9px;height:.8px;background:#a0a5b8"></div>
    <div style="left:5.500px;top:29.500px;width:14.500px;height:12px;border:.6px solid #2c3f96;border-bottom:0"></div>
    <div style="left:5.500px;top:29.300px;width:2.300px;height:2px;background:#e8ecfa"></div>
    <div style="left:8px;top:32px;width:10px;height:4.500px;background:repeating-linear-gradient(180deg,#7f8fd0 0 .8px,#061b78 .8px 1.500px)"></div>
    <div style="left:10px;top:38px;width:7px;height:1.500px;background:repeating-linear-gradient(180deg,#5d6fb8 0 .7px,#061b78 .7px 1.400px)"></div>
    <div style="left:17.800px;top:40.500px;width:1.500px;height:1.500px;background:#c6cef0"></div>
  </div>

  <div class="t slate" style="left:836px;top:644.200px;font-size:13px">0:04</div>
  <div class="abs" style="left:835px;top:665px;width:326.300px;height:21px;background:#ebebf3"></div>
  <div class="t" style="left:836px;top:669px;font-size:14px;letter-spacing:0.11px;color:#14151d">Going to start with Macy's pricing page and contact</div>

  <!-- dropdown -->
  <div class="abs" style="left:931.800px;top:177.400px;width:227.800px;height:88.400px;background:#fff;border-radius:8px;box-shadow:0 0 0 1px rgba(40,45,89,.05),0 2px 10px rgba(40,45,89,.10)"></div>
  <svg style="left:946px;top:195px" width="15" height="13" viewBox="0 0 15 13" fill="none" stroke="#14151d" stroke-width="1.200" stroke-linecap="round" stroke-linejoin="round"><rect x=".8" y=".8" width="13.400" height="8.400" rx="2"/><path d="M4 12h7"/><path d="M6.200 3.200v3.600L9.200 5Z" fill="#14151d"/></svg>
  <div class="t" style="left:969.500px;top:194.500px;font-size:14px;color:#14151d">Download session recording</div>
  <div class="t" style="left:946.300px;top:237px;font-size:11.500px;letter-spacing:0.5px;color:#14151d;-webkit-text-stroke:.2px #14151d">Aa</div>
  <div class="t" style="left:969.500px;top:235.500px;font-size:14px;letter-spacing:0.15px;color:#14151d">Download transcript</div>
</div>

</body>
</html>
